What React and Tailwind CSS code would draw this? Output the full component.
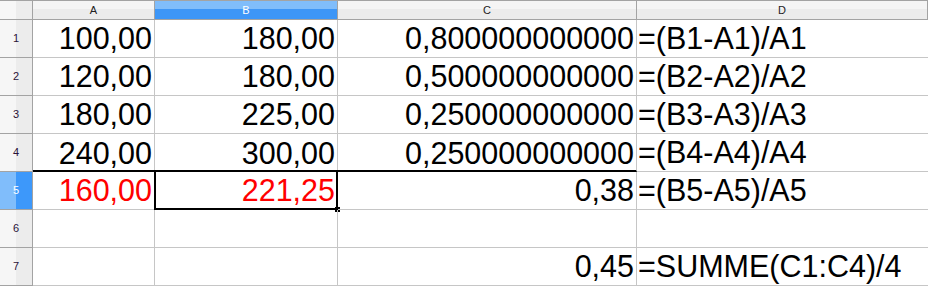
import React from 'react';

const cols = ['A', 'B', 'C', 'D'];

// zeilen der tabelle: [A, B, C, D]
const rows = [
  ['100,00', '180,00', '0,800000000000', '=(B1-A1)/A1'],
  ['120,00', '180,00', '0,500000000000', '=(B2-A2)/A2'],
  ['180,00', '225,00', '0,250000000000', '=(B3-A3)/A3'],
  ['240,00', '300,00', '0,250000000000', '=(B4-A4)/A4'],
  ['160,00', '221,25', '0,38', '=(B5-A5)/A5'],
  ['', '', '', ''],
  ['', '', '0,45', '=SUMME(C1:C4)/4'],
];

const headerBase = 'flex items-center justify-center text-[11px] border-b border-r border-t border-[#a3a3a3]';
const rowHeadBase = 'flex items-center justify-center text-[11px] border-b border-r border-[#a3a3a3]';

export default function App() {
  return (
    <div
      className="w-[928px] h-[287px] bg-white overflow-hidden"
      style={{ fontFamily: '"Liberation Sans", Arial, sans-serif' }}
    >
      <div className="grid grid-cols-[33px_122px_183px_299px_1fr] grid-rows-[20px_repeat(7,38px)]">
        {/* Ecke */}
        <div className="border-t border-b border-r border-[#a3a3a3] bg-[linear-gradient(to_right,#f7f7f7_50%,#ededed_50%)]" />
        {cols.map((c) => (
          <div
            key={c}
            className={
              c === 'B'
                ? headerBase + ' text-white bg-[linear-gradient(to_bottom,#80bdfb_45%,#3d96f7_45%)]'
                : headerBase + ' text-[#222] bg-[linear-gradient(to_bottom,#f5f5f5_45%,#ececec_45%)]'
            }
          >
            {c}
          </div>
        ))}

        {rows.map((r, i) => {
          const n = i + 1;
          const active = n === 5;
          return (
            <React.Fragment key={n}>
              <div
                className={
                  active
                    ? rowHeadBase + ' text-white bg-[linear-gradient(to_right,#80bdfb_50%,#3d98fa_50%)]'
                    : rowHeadBase + ' text-[#2a1238] bg-[linear-gradient(to_right,#f6f6f6_50%,#ececec_50%)]'
                }
              >
                {n}
              </div>
              {r.map((val, j) => {
                const thick = n === 4 && j < 3;
                const red = n === 5 && j < 2;
                return (
                  <div
                    key={j}
                    className={
                      'relative flex items-center whitespace-nowrap text-[30.5px] leading-none border-r border-[#c6c6c6] ' +
                      (j === 3 ? 'justify-start pl-[1px] border-r-0 ' : 'justify-end pr-[2px] ') +
                      (thick ? 'border-b-2 border-b-black ' : 'border-b ') +
                      (red ? 'text-[#ff0000]' : 'text-black')
                    }
                  >
                    <span className={thick ? 'translate-y-[0.5px]' : ''}>{val}</span>
                    {n === 5 && j === 1 && (
                      <>
                        <div className="absolute -left-[1px] -top-[2px] right-[-1px] bottom-[-1px] border-2 border-black pointer-events-none" />
                        <div className="absolute right-[-3px] bottom-[-3px] w-[5px] h-[5px] bg-black" />
                      </>
                    )}
                  </div>
                );
              })}
            </React.Fragment>
          );
        })}
      </div>
    </div>
  );
}
